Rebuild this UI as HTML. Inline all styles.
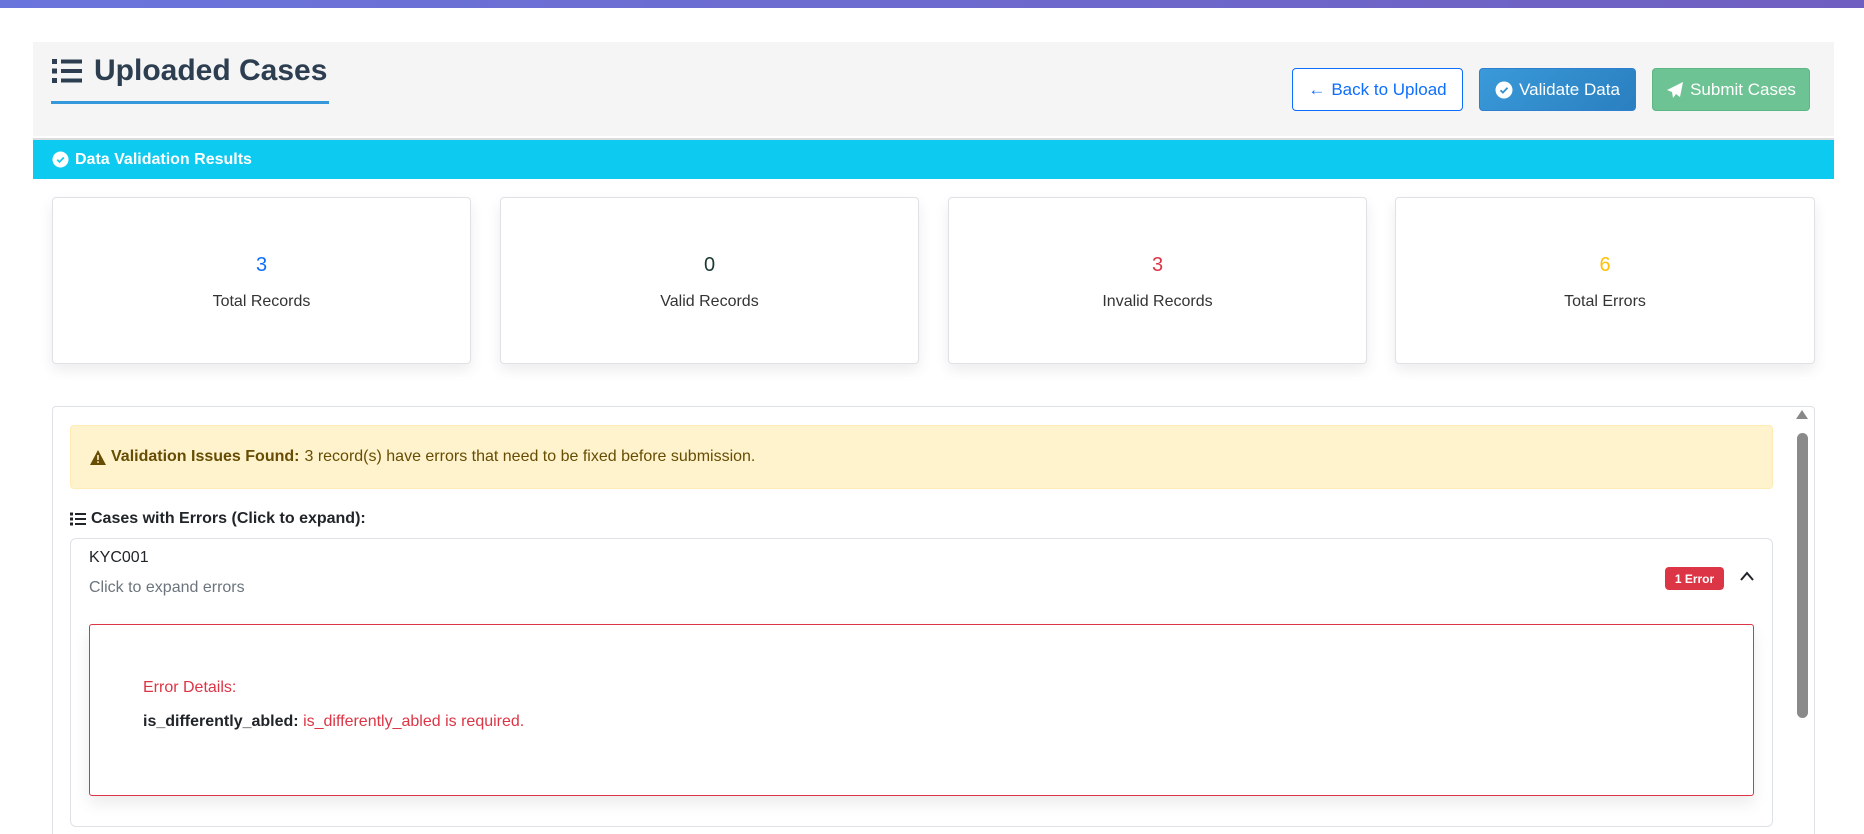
<!DOCTYPE html>
<html><head><meta charset="utf-8"><style>
*{box-sizing:border-box;margin:0;padding:0}
html{height:834px;overflow:hidden}
body{width:1864px;height:834px;overflow:hidden;background:#fff;font-family:"Liberation Sans",sans-serif;color:#212529;position:relative}
.abs{position:absolute}
.topbar{left:0;top:0;width:1864px;height:8px;background:linear-gradient(90deg,#6a75dc,#6f5fc0)}
.header{left:33px;top:42px;width:1801px;height:94px;background:#f5f5f5}
.title{left:52px;top:54px;font-size:30px;font-weight:600;color:#2c3e50;display:flex;align-items:center;gap:12px}
.uline{left:51px;top:101px;width:278px;height:3px;background:#3498db}
.btn{top:68px;height:43px;border-radius:4px;font-size:17px;display:flex;align-items:center;justify-content:center;gap:6px}
.cyan{left:33px;top:138px;width:1801px;height:41px;background:#0dcaf0;color:#fff;font-weight:bold;font-size:16px;display:flex;align-items:center;padding-left:19px;gap:6px;border-top:2px solid #dcdcdc}
.card{top:197px;height:167px;background:#fff;border:1px solid #dee2e6;border-radius:4px;box-shadow:0 6px 14px rgba(0,0,0,.08);text-align:center}
.card .n{margin-top:56px;font-size:20px;font-weight:500}
.card .l{margin-top:16px;font-size:16px;color:#333}
.cont{left:52px;top:406px;width:1763px;height:428px;border:1px solid #dee2e6;border-bottom:none;border-radius:4px 4px 0 0;background:#fff}
</style></head><body>
<div class="abs topbar"></div>
<div class="abs header"></div>
<div class="abs title"><svg width="30" height="26" viewBox="0 0 30 26"><rect x="0" y="1" width="5" height="5" fill="#2c3e50"/><rect x="0" y="10.5" width="5" height="5" fill="#2c3e50"/><rect x="0" y="20" width="5" height="5" fill="#2c3e50"/><rect x="9" y="1.5" width="21" height="4" fill="#2c3e50"/><rect x="9" y="11" width="21" height="4" fill="#2c3e50"/><rect x="9" y="20.5" width="21" height="4" fill="#2c3e50"/></svg><span>Uploaded Cases</span></div>
<div class="abs uline"></div>
<div class="abs btn" style="left:1292px;width:171px;border:1px solid #0d6efd;color:#0d6efd;background:#fff"><span style="font-weight:bold">&#8592;</span>Back to Upload</div>
<div class="abs btn" style="left:1479px;width:157px;background:linear-gradient(135deg,#3a9ad9,#2a7fc0);border:1px solid #2f7fd0;color:#fff"><svg width="18" height="18" viewBox="0 0 18 18"><circle cx="9" cy="9" r="8.5" fill="#fff"/><path d="M5.5 9.2l2.4 2.4 4.6-4.8" stroke="#2f8fd0" stroke-width="1.8" fill="none"/></svg>Validate Data</div>
<div class="abs btn" style="left:1652px;width:158px;background:#6ec394;border:1px solid #5cb783;color:#fff"><svg width="18" height="18" viewBox="0 0 18 18"><path d="M17 1L1 9l5 2 1 6 3-4 4 3z" fill="#fff"/></svg>Submit Cases</div>
<div class="abs cyan"><svg width="17" height="17" viewBox="0 0 18 18"><circle cx="9" cy="9" r="8.5" fill="#fff"/><path d="M5.5 9.2l2.4 2.4 4.6-4.8" stroke="#0dcaf0" stroke-width="1.8" fill="none"/></svg>Data Validation Results</div>
<div class="abs card" style="left:52px;width:419px"><div class="n" style="color:#0d6efd">3</div><div class="l">Total Records</div></div>
<div class="abs card" style="left:500px;width:419px"><div class="n" style="color:#1e3932">0</div><div class="l">Valid Records</div></div>
<div class="abs card" style="left:948px;width:419px"><div class="n" style="color:#dc3545">3</div><div class="l">Invalid Records</div></div>
<div class="abs card" style="left:1395px;width:420px"><div class="n" style="color:#ffc107">6</div><div class="l">Total Errors</div></div>
<div class="abs cont"></div>
<div class="abs" style="left:1796px;top:410px;width:0;height:0;border-left:6px solid transparent;border-right:6px solid transparent;border-bottom:9px solid #888"></div>
<div class="abs" style="left:1797px;top:433px;width:11px;height:285px;border-radius:6px;background:#8a8a8a"></div>
<div class="abs" style="left:70px;top:425px;width:1703px;height:64px;background:#fff3cd;border:1px solid #ffecb5;border-radius:4px;font-size:16px;color:#664d03;display:flex;align-items:center;padding-left:19px;gap:5px"><svg width="16" height="15" viewBox="0 0 16 15"><path d="M8 0L16 15H0z" fill="#664d03"/><rect x="7.2" y="5" width="1.6" height="5" fill="#fff3cd"/><rect x="7.2" y="11.3" width="1.6" height="1.6" fill="#fff3cd"/></svg><b>Validation Issues Found:</b> 3 record(s) have errors that need to be fixed before submission.</div>
<div class="abs" style="left:70px;top:510px;font-size:16px;font-weight:600;display:flex;align-items:center;gap:5px"><svg width="16" height="14" viewBox="0 0 16 14"><rect x="0" y="0.5" width="3" height="3" fill="#212529"/><rect x="0" y="5.5" width="3" height="3" fill="#212529"/><rect x="0" y="10.5" width="3" height="3" fill="#212529"/><rect x="5" y="1" width="11" height="2" fill="#212529"/><rect x="5" y="6" width="11" height="2" fill="#212529"/><rect x="5" y="11" width="11" height="2" fill="#212529"/></svg>Cases with Errors (Click to expand):</div>
<div class="abs" style="left:70px;top:538px;width:1703px;height:289px;border:1px solid #dee2e6;border-radius:6px;background:#fff"></div>
<div class="abs" style="left:89px;top:549px;font-size:16px;font-weight:500">KYC001</div>
<div class="abs" style="left:89px;top:579px;font-size:16px;color:#6c757d">Click to expand errors</div>
<div class="abs" style="left:1665px;top:567px;width:59px;height:23px;background:#dc3545;border-radius:4px;color:#fff;font-size:12px;font-weight:bold;display:flex;align-items:center;justify-content:center">1 Error</div>
<svg class="abs" style="left:1739px;top:570px" width="16" height="12" viewBox="0 0 16 12"><path d="M2 10L8 3l6 7" stroke="#212529" stroke-width="2" fill="none"/></svg>
<div class="abs" style="left:89px;top:624px;width:1665px;height:172px;border:1px solid #dc3545;border-radius:3px;background:#fff;box-shadow:0 8px 16px rgba(0,0,0,.08)"></div>
<div class="abs" style="left:143px;top:679px;font-size:16px;color:#dc3545;font-weight:500">Error Details:</div>
<div class="abs" style="left:143px;top:713px;font-size:16px"><b>is_differently_abled:</b> <span style="color:#dc3545">is_differently_abled is required.</span></div>
</body></html>
